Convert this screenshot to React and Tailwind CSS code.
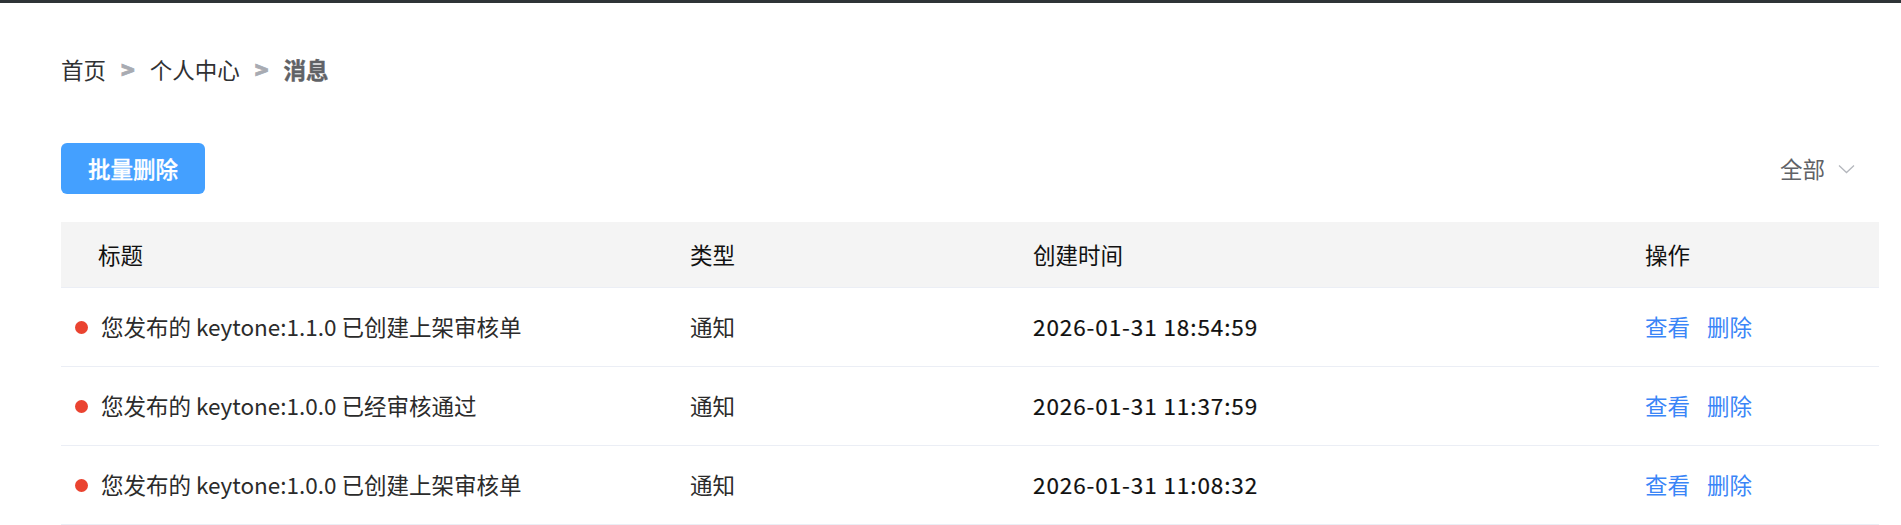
import React from "react";

const rows = [
  { title: "您发布的 keytone:1.1.0 已创建上架审核单", type: "通知", time: "2026-01-31 18:54:59" },
  { title: "您发布的 keytone:1.0.0 已经审核通过", type: "通知", time: "2026-01-31 11:37:59" },
  { title: "您发布的 keytone:1.0.0 已创建上架审核单", type: "通知", time: "2026-01-31 11:08:32" },
];

export default function App() {
  return (
    <div className="min-h-[525px] bg-white border-t-[3px] border-[#2f3437] font-['Noto_Sans_CJK_SC',sans-serif] text-[22.5px]">
      <div className="pl-[61px] pr-[22px]">
        {/* breadcrumb */}
        <div className="pt-[50px] flex items-center h-[82px] leading-[32px]">
          <span className="text-[#303133]">首页</span>
          <span className="mx-[15px] text-[#a8abb2] font-black [-webkit-text-stroke:0.8px_#a8abb2]">&gt;</span>
          <span className="text-[#303133]">个人中心</span>
          <span className="mx-[15px] text-[#a8abb2] font-black [-webkit-text-stroke:0.8px_#a8abb2]">&gt;</span>
          <span className="text-[#606266] font-bold [-webkit-text-stroke:0.4px_#606266]">消息</span>
        </div>

        {/* toolbar */}
        <div className="mt-[58px] flex items-center justify-between h-[51px]">
          <button className="w-[144px] h-[51px] rounded-[6px] bg-[#44a0ff] text-white font-medium leading-none [-webkit-text-stroke:0.3px_#ffffff]">
            批量删除
          </button>
          <div className="flex items-center gap-[13px] pr-[24px] text-[#606266]">
            <span>全部</span>
            <svg width="17" height="10" viewBox="0 0 17 10" fill="none">
              <path d="M1 1.5L8.5 8.5L16 1.5" stroke="#b4b7bd" strokeWidth="1.3" />
            </svg>
          </div>
        </div>

        {/* table */}
        <div className="mt-[28px]">
          <div className="grid grid-cols-[629px_343px_612px_1fr] h-[66px] items-center bg-[#f4f4f4] border-b border-[#ebeef5] text-[#111]">
            <div className="pl-[37px]">标题</div>
            <div>类型</div>
            <div>创建时间</div>
            <div>操作</div>
          </div>
          {rows.map((r, i) => (
            <div
              key={i}
              className="grid grid-cols-[629px_343px_612px_1fr] h-[79px] items-center border-b border-[#ebeef5]"
            >
              <div className="pl-[14px] flex items-center gap-[13px] text-[#2b2b2b]">
                <span className="w-[13px] h-[13px] rounded-full bg-[#ea4330] shrink-0" />
                <span>{r.title}</span>
              </div>
              <div className="text-[#2b2b2b]">{r.type}</div>
              <div className="text-[#111] tracking-[0.9px] [-webkit-text-stroke:0.2px_#111111]">{r.time}</div>
              <div className="flex gap-[17px] text-[#3a85f7]">
                <span>查看</span>
                <span>删除</span>
              </div>
            </div>
          ))}
        </div>
      </div>
    </div>
  );
}
